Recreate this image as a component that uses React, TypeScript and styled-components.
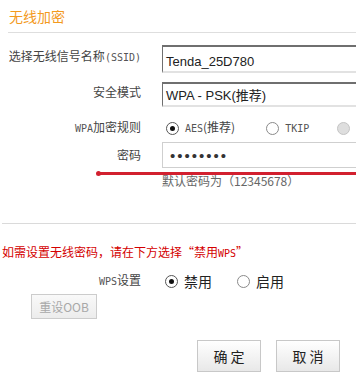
import React from "react";
import styled, { createGlobalStyle } from "styled-components";

const Global = createGlobalStyle`
  html, body { margin: 0; padding: 0; background: #fff; }
  body {
    width: 356px;
    height: 390px;
    overflow: hidden;
    font-family: "Noto Sans CJK SC", "Liberation Sans", sans-serif;
    color: #333;
    font-size: 12px;
  }
`;

const Page = styled.div`
  position: relative;
  width: 356px;
  height: 390px;
  overflow: hidden;
`;

const Header = styled.div`
  height: 33px;
  margin-left: 8px;
  border-bottom: 1px solid #dedede;
  display: flex;
  align-items: center;
  padding-left: 1px;
  padding-top: 1px;
  box-sizing: border-box;
`;

const Title = styled.h2`
  margin: 0;
  font-size: 14px;
  font-weight: normal;
  line-height: 17px;
  color: #f39a1e;
  font-family: "Noto Sans CJK SC", sans-serif;
`;

const Form = styled.div`
  display: flex;
  flex-direction: column;
  padding-top: 12px;
`;

const Row = styled.div<{ $h: number; $mt?: number; $center?: boolean }>`
  display: grid;
  grid-template-columns: 133px 1fr;
  column-gap: 21px;
  padding-left: 8px;
  height: ${(p) => p.$h}px;
  margin-top: ${(p) => p.$mt ?? 0}px;
  align-items: ${(p) => (p.$center ? "center" : "start")};
`;

const Label = styled.div<{ $pt?: number }>`
  text-align: right;
  white-space: nowrap;
  font-size: 12px;
  line-height: 16px;
  color: #444;
  padding-top: ${(p) => p.$pt ?? 0}px;
`;

const Mono = styled.span`
  font-family: "DejaVu Sans Mono", "Liberation Mono", monospace;
  font-size: 10px;
  color: #555;
`;

const InsetBox = styled.div<{ $h: number; $pt: number }>`
  box-sizing: border-box;
  height: ${(p) => p.$h}px;
  width: 220px;
  border-top: 2px solid #6f6f6f;
  border-left: 1px solid #6f6f6f;
  border-bottom: 2px solid #e2e2e2;
  border-right: 2px solid #e2e2e2;
  padding: ${(p) => p.$pt}px 0 0 3px;
  font-family: "Liberation Sans", "Noto Sans CJK SC", sans-serif;
  font-size: 13px;
  line-height: 16px;
  color: #222;
  white-space: nowrap;
`;

const PasswordBox = styled.div`
  box-sizing: border-box;
  height: 26px;
  width: 220px;
  border: 1px solid #cfcfcf;
  padding-left: 7px;
  display: flex;
  align-items: center;
  font-family: "Liberation Sans", sans-serif;
  font-size: 15px;
  letter-spacing: 2px;
  color: #333;
`;

const Options = styled.div<{ $ml: number }>`
  display: flex;
  align-items: center;
  margin-left: ${(p) => p.$ml}px;
  white-space: nowrap;
`;

const Option = styled.label<{ $mr?: number }>`
  display: flex;
  align-items: center;
  gap: 6px;
  margin-right: ${(p) => p.$mr ?? 0}px;
  font-size: 12px;
  line-height: 16px;
  color: #333;
`;

const OptionText = styled.span<{ $big?: boolean }>`
  font-size: ${(p) => (p.$big ? 14 : 12)}px;
  color: ${(p) => (p.$big ? "#222" : "#444")};
`;

const Radio = styled.span<{ $checked?: boolean; $disabled?: boolean }>`
  box-sizing: border-box;
  width: 13px;
  height: 13px;
  border-radius: 50%;
  border: 1px solid ${(p) => (p.$disabled ? "#c4c4c4" : p.$checked ? "#555" : "#8a8a8a")};
  background: ${(p) => (p.$disabled ? "#dedede" : "#fff")};
  display: flex;
  align-items: center;
  justify-content: center;
  flex: none;
  &::after {
    content: "";
    display: ${(p) => (p.$checked ? "block" : "none")};
    width: 5px;
    height: 5px;
    border-radius: 50%;
    background: #111;
  }
`;

const Hint = styled.div`
  margin-top: 5px;
  padding-left: 162px;
  font-size: 12px;
  line-height: 16px;
  color: #666;
  white-space: nowrap;
`;

const Divider = styled.div`
  margin-top: 34px;
  margin-left: 2px;
  height: 1px;
  background: #dadada;
`;

const Warning = styled.div`
  margin-top: 20px;
  padding-left: 2px;
  font-size: 12px;
  line-height: 16px;
  color: #d40000;
  white-space: nowrap;
`;

const WarnMono = styled.span`
  font-family: "DejaVu Sans Mono", monospace;
  font-size: 10px;
`;

const ResetButton = styled.button`
  margin: 3px 0 0 31px;
  width: 66px;
  height: 25px;
  box-sizing: border-box;
  border: 1px solid #cccccc;
  background: linear-gradient(#f9f9f9, #ececec);
  color: #a8a8a8;
  font-family: "Noto Sans CJK SC", "Liberation Sans", sans-serif;
  font-size: 12px;
  padding: 0;
  align-self: flex-start;
`;

const Actions = styled.div`
  display: flex;
  gap: 15px;
  margin-top: 21px;
  padding-left: 197px;
`;

const ActionButton = styled.button`
  width: 64px;
  height: 32px;
  box-sizing: border-box;
  border: 1px solid #c8c8c8;
  background: linear-gradient(#ffffff, #e8e8e8);
  color: #222;
  font-family: "Noto Sans CJK SC", sans-serif;
  font-size: 14px;
  letter-spacing: 3px;
  padding: 0 0 0 3px;
`;

const RedMark = styled.div`
  position: absolute;
  left: 97px;
  top: 172px;
  width: 260px;
  height: 3px;
  background: #d2202f;
  &::before {
    content: "";
    position: absolute;
    left: -1px;
    top: -1px;
    width: 5px;
    height: 5px;
    border-radius: 50%;
    background: #d2202f;
  }
`;

export default function App() {
  return (
    <Page>
      <Global />
      <Header>
        <Title>无线加密</Title>
      </Header>
      <Form>
        <Row $h={28}>
          <Label $pt={3}>
            选择无线信号名称<Mono>(SSID)</Mono>
          </Label>
          <InsetBox $h={28} $pt={7}>Tenda_25D780</InsetBox>
        </Row>
        <Row $h={25} $mt={9}>
          <Label $pt={2}>安全模式</Label>
          <InsetBox $h={25} $pt={4}>WPA - PSK(推荐)</InsetBox>
        </Row>
        <Row $h={20} $mt={11} $center>
          <Label>
            <Mono>WPA</Mono>加密规则
          </Label>
          <Options $ml={4}>
            <Option $mr={31}>
              <Radio $checked />
              <OptionText>
                <Mono>AES</Mono>(推荐)
              </OptionText>
            </Option>
            <Option $mr={28}>
              <Radio />
              <OptionText>
                <Mono>TKIP</Mono>
              </OptionText>
            </Option>
            <Option>
              <Radio $disabled />
            </Option>
          </Options>
        </Row>
        <Row $h={26} $mt={4} $center>
          <Label>密码</Label>
          <PasswordBox>••••••••</PasswordBox>
        </Row>
        <Hint>默认密码为（12345678）</Hint>
        <Divider />
        <Warning>
          如需设置无线密码，请在下方选择“禁用<WarnMono>WPS</WarnMono>”
        </Warning>
        <Row $h={20} $mt={9} $center>
          <Label>
            <Mono>WPS</Mono>设置
          </Label>
          <Options $ml={3}>
            <Option $mr={25}>
              <Radio $checked />
              <OptionText $big>禁用</OptionText>
            </Option>
            <Option>
              <Radio />
              <OptionText $big>启用</OptionText>
            </Option>
          </Options>
        </Row>
        <ResetButton disabled>重设OOB</ResetButton>
        <Actions>
          <ActionButton>确定</ActionButton>
          <ActionButton>取消</ActionButton>
        </Actions>
      </Form>
      <RedMark />
    </Page>
  );
}
